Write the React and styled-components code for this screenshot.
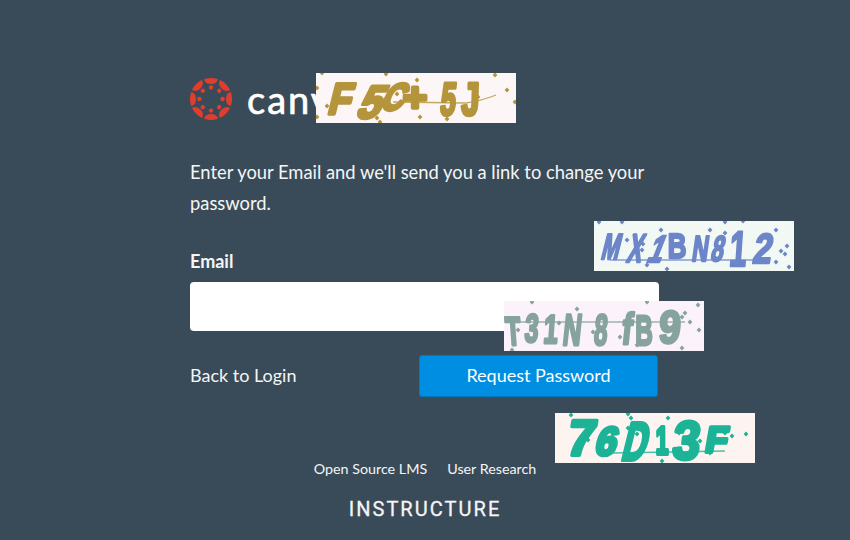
import React from "react";
import styled, { createGlobalStyle } from "styled-components";

const Global = createGlobalStyle`
  html, body { margin: 0; padding: 0; background: #394b58; }
  body { font-family: Lato, "Open Sans", sans-serif; }
`;

const Page = styled.div`
  position: relative;
  width: 850px;
  height: 540px;
  overflow: hidden;
  background: #394b58;
  color: #f5f5f5;
`;

const Column = styled.main`
  width: 470px;
  margin: 0 auto;
  padding-top: 72px;
  display: flex;
  flex-direction: column;
`;

const Brand = styled.div`
  display: flex;
  align-items: center;
  gap: 15px;
  height: 54px;
`;

const Wordmark = styled.span`
  font-size: 38px;
  line-height: 54px;
  letter-spacing: 2px;
  color: #fff;
  font-weight: 400;
  -webkit-text-stroke: 0.7px #fff;
`;

const Intro = styled.p`
  margin: 31px 0 0;
  font-size: 18.35px;
  line-height: 31px;
  color: #f5f5f5;
`;

const Label = styled.label`
  display: block;
  margin-top: 27px;
  font-size: 18px;
  line-height: 31px;
  font-weight: 700;
  color: #f5f5f5;
`;

const Input = styled.input`
  display: block;
  box-sizing: border-box;
  width: 469px;
  height: 49px;
  margin-top: 5px;
  border: 0;
  border-radius: 4px;
  background: #fff;
`;

const Actions = styled.div`
  display: flex;
  align-items: center;
  justify-content: space-between;
  width: 468px;
  margin-top: 24px;
`;

const BackLink = styled.a`
  font-size: 18px;
  line-height: 22px;
  margin-bottom: 2px;
  color: #f5f5f5;
  text-decoration: none;
`;

const Submit = styled.button`
  width: 239px;
  height: 42px;
  padding: 0 0 2px;
  border: 1px solid #0079c1;
  border-radius: 3px;
  background: #008ee2;
  color: #fff;
  font-family: inherit;
  font-size: 18px;
`;

const Footer = styled.footer`
  margin-top: 62px;
  display: flex;
  flex-direction: column;
  align-items: center;
`;

const FooterLinks = styled.nav`
  display: flex;
  gap: 20px;
  font-size: 14.3px;
  line-height: 20px;
`;

const FooterLink = styled.a`
  color: #f5f5f5;
`;

const Instructure = styled.div`
  margin-top: 18px;
  font-family: Roboto, sans-serif;
  font-size: 20px;
  font-weight: 400;
  line-height: 24px;
  letter-spacing: 2.05px;
  color: #f5f5f5;
  -webkit-text-stroke: 0.3px #f5f5f5;
`;

const Patch = styled.svg`
  position: absolute;
  left: ${(p) => p.$x}px;
  top: ${(p) => p.$y}px;
  width: 200px;
  height: 50px;
  background: ${(p) => p.$bg};
  color: ${(p) => p.$ink};
`;

const Strokes = styled.g`
  filter: blur(0.6px);
`;

const Glyph = styled.text`
  font-family: "Liberation Sans", sans-serif;
  font-weight: 700;
  fill: currentColor;
  stroke: currentColor;
  stroke-width: ${(p) => p.$weight}px;
  stroke-linejoin: round;
`;

const Strike = styled.path`
  fill: none;
  stroke: currentColor;
  stroke-width: 1.3px;
  opacity: 0.8;
`;

const Speck = styled.rect`
  fill: currentColor;
`;

const captchas = [
  {
    x: 316, y: 73, bg: "#fdf6f6", ink: "#b5953c", weight: 3.6,
    line: "M77 29 L150 30 Q165 28 180 22",
    dots: [[6,0],[70,1],[101,7],[81,21],[179,2],[191,17],[199,29],[162,24],[161,12],[104,44],[131,46],[61,45],[64,49],[1,44],[1,15],[11,33]],
    glyphs: [
      ["F", 22, 41, 44, 14, 0.85, 0],
      ["5", 50, 45, 46, 24, 0.9, 0],
      ["C", 74, 37, 38, 24, 0.8, 0],
      ["+", 99, 38, 40, 0, 1.05, 0],
      ["5", 131, 42, 46, 6, 0.6, 0],
      ["J", 154, 42, 46, 2, 0.7, 0],
    ],
  },
  {
    x: 594, y: 221, bg: "#f2f8f4", ink: "#6c86c9", weight: 2.4,
    line: "M16 39 L159 39",
    dots: [[5,1],[28,1],[67,9],[33,19],[49,23],[48,29],[53,44],[73,48],[131,1],[149,0],[131,12],[116,9],[182,9],[193,25],[187,30],[191,33],[182,41],[195,46]],
    glyphs: [
      ["M", 15, 38, 36, 14, 0.6, 0],
      ["X", 39, 41, 40, 14, 0.55, 0],
      ["1", 59, 41, 38, 22, 0.7, 0],
      ["B", 83, 37, 36, 0, 0.72, 0],
      ["N", 105, 40, 36, 8, 0.62, 0],
      ["8", 122, 40, 36, 12, 0.62, 0],
      ["1", 143, 45, 50, 4, 0.62, 0],
      ["2", 167, 42, 42, 10, 0.8, 0],
    ],
  },
  {
    x: 504, y: 301, bg: "#fbf2fb", ink: "#86a39d", weight: 2.8,
    line: "M11 21 L181 21",
    dots: [[28,1],[73,8],[55,22],[14,29],[89,31],[116,36],[8,49],[133,44],[178,47],[194,4],[181,12],[178,16],[186,21],[195,29],[143,1]],
    glyphs: [
      ["T", 10, 44, 40, -4, 0.62, 0],
      ["3", 27, 41, 40, 4, 0.62, 0],
      ["1", 46, 42, 40, 4, 0.65, 0],
      ["N", 67, 44, 44, 6, 0.58, 0],
      ["8", 96, 44, 44, 4, 0.55, 0],
      ["f", 122, 43, 44, 6, 0.7, 0],
      ["B", 140, 44, 42, 0, 0.58, 0],
      ["9", 165, 42, 46, 4, 0.85, 0],
    ],
  },
  {
    x: 555, y: 413, bg: "#fdf4f2", ink: "#1cb396", weight: 3.8,
    line: "M58 40 L170 38",
    dots: [[16,2],[73,1],[76,5],[113,5],[73,15],[82,21],[33,27],[107,48],[122,18],[128,15],[124,20],[145,28],[155,40],[170,20],[177,23],[191,21]],
    glyphs: [
      ["7", 24, 42, 50, 10, 1, 0],
      ["6", 49, 42, 40, 14, 0.95, 0],
      ["D", 77, 47, 54, 14, 0.62, 0],
      ["1", 107, 41, 38, 0, 0.6, 0],
      ["3", 130, 46, 54, 6, 0.9, 0],
      ["F", 160, 39, 36, 10, 1, 0],
    ],
  },
];

function Captcha({ x, y, bg, ink, weight, line, dots, glyphs }) {
  return (
    <Patch $x={x} $y={y} $bg={bg} $ink={ink} viewBox="0 0 200 50">
      <Strokes>
        <Strike d={line} />
        {glyphs.map(([ch, gx, gy, size, skew, sx, rot], i) => (
          <Glyph
            key={i}
            $weight={weight}
            textAnchor="middle"
            fontSize={size}
            transform={`translate(${gx} ${gy}) rotate(${rot}) skewX(${-skew}) scale(${sx} 1)`}
          >
            {ch}
          </Glyph>
        ))}
        {dots.map(([dx, dy], i) => (
          <Speck key={i} x={dx - 1.7} y={dy - 1.7} width="3.4" height="3.4" transform={`rotate(45 ${dx} ${dy})`} />
        ))}
      </Strokes>
    </Patch>
  );
}

function CanvasMark() {
  const angles = [0, 45, 90, 135, 180, 225, 270, 315];
  return (
    <svg width="42" height="42" viewBox="-21 -21 42 42" aria-hidden="true">
      {angles.map((a) => (
        <g key={a} transform={`rotate(${a})`} fill="#e03e2d">
          <path d="M-7-19.8A21 21 0 0 1 7-19.8Q6-15 0-15T-7-19.8Z" />
          <circle cx="0" cy="-11.6" r="2.2" />
        </g>
      ))}
    </svg>
  );
}

export default function App() {
  return (
    <Page>
      <Global />
      <Column>
        <Brand>
          <CanvasMark />
          <Wordmark>canvas</Wordmark>
        </Brand>
        <Intro>Enter your Email and we'll send you a link to change your password.</Intro>
        <Label htmlFor="email">Email</Label>
        <Input id="email" type="text" />
        <Actions>
          <BackLink href="#">Back to Login</BackLink>
          <Submit type="button">Request Password</Submit>
        </Actions>
        <Footer>
          <FooterLinks>
            <FooterLink>Open Source LMS</FooterLink>
            <FooterLink>User Research</FooterLink>
          </FooterLinks>
          <Instructure>INSTRUCTURE</Instructure>
        </Footer>
      </Column>
      {captchas.map((c) => (
        <Captcha key={c.x} {...c} />
      ))}
    </Page>
  );
}
